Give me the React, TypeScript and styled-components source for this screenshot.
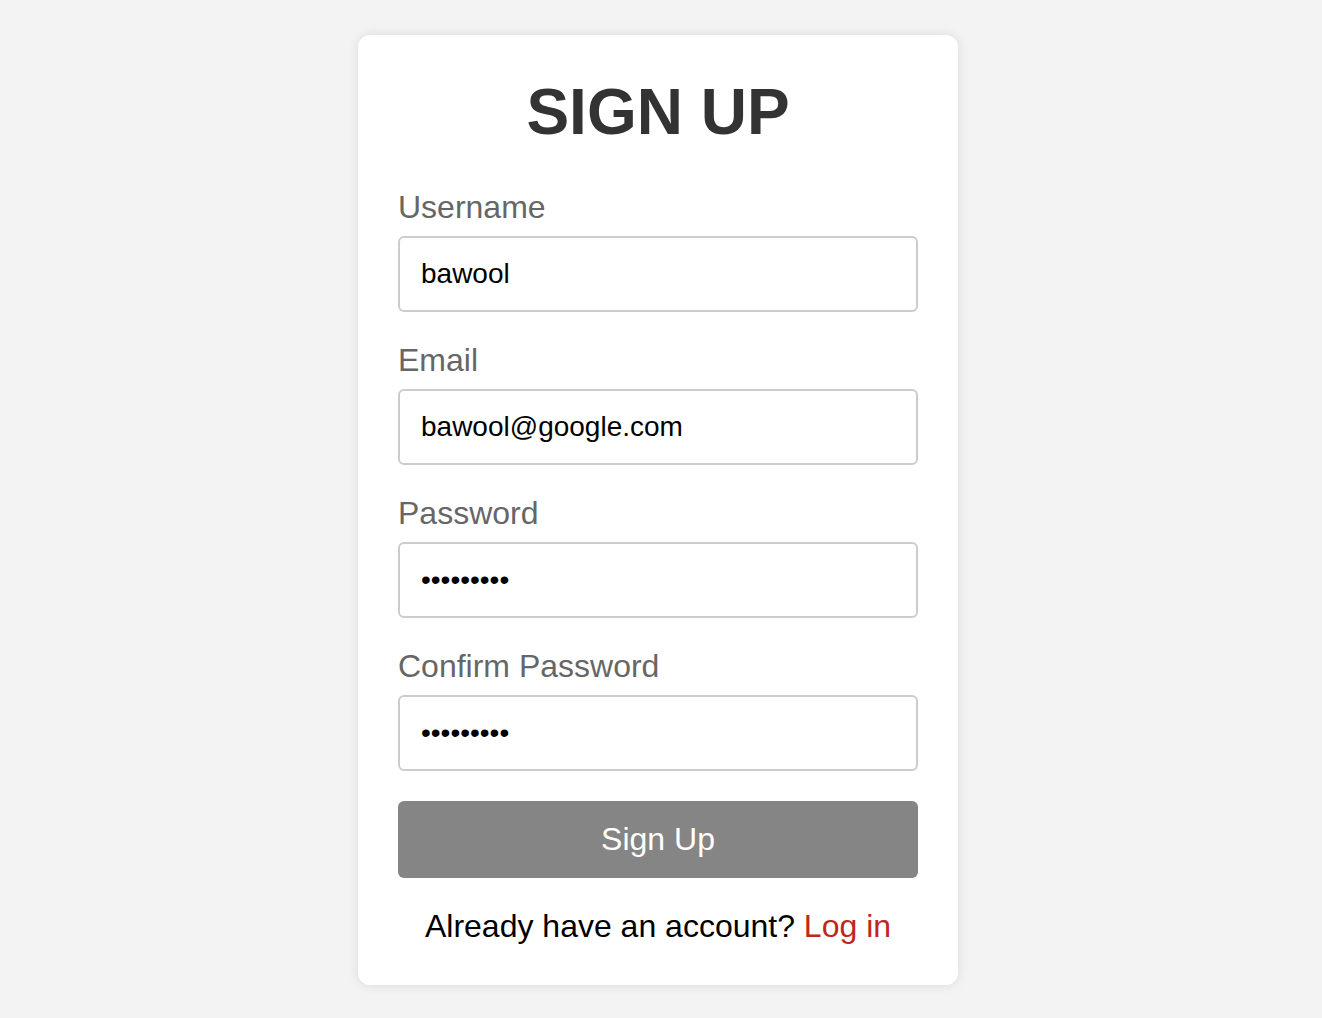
import React from "react";
import styled, { createGlobalStyle } from "styled-components";

const GlobalStyle = createGlobalStyle`
  html, body {
    margin: 0;
    padding: 0;
    background: #f3f3f3;
    font-family: "Liberation Sans", Arial, sans-serif;
  }
`;

const Page = styled.div`
  display: flex;
  justify-content: center;
  align-items: flex-start;
  padding: 35px 6px 33px 0;
  min-height: 1018px;
  box-sizing: border-box;
`;

const Card = styled.form`
  width: 600px;
  box-sizing: border-box;
  background: #ffffff;
  border-radius: 12px;
  box-shadow: 0 0 12px rgba(0, 0, 0, 0.1);
  padding: 40px;
  display: flex;
  flex-direction: column;
`;

const Title = styled.h1`
  margin: 0 0 40px;
  font-size: 64px;
  font-weight: 700;
  color: #333333;
  text-align: center;
  line-height: normal;
`;

const Field = styled.div`
  display: flex;
  flex-direction: column;
  margin-bottom: 30px;
`;

const Label = styled.label`
  font-size: 32px;
  color: #666666;
  line-height: normal;
  margin-bottom: 10px;
`;

const Input = styled.input`
  height: 76px;
  box-sizing: border-box;
  border: 2px solid #cccccc;
  border-radius: 6px;
  padding: 0 20px 0 21px;
  font-family: "Liberation Sans", Arial, sans-serif;
  font-size: 28px;
  color: #000000;
  background: #ffffff;
  outline: none;
`;

const SubmitButton = styled.button`
  height: 77px;
  border: none;
  border-radius: 6px;
  background: #858585;
  color: #ffffff;
  font-family: "Liberation Sans", Arial, sans-serif;
  font-size: 32px;
  cursor: pointer;
`;

const Footer = styled.p`
  margin: 30px 0 0;
  text-align: center;
  font-size: 32px;
  color: #000000;
  line-height: normal;
`;

const LoginLink = styled.a`
  color: #c0261b;
  text-decoration: none;
`;

const fields = [
  { id: "username", label: "Username", type: "text", value: "bawool" },
  { id: "email", label: "Email", type: "email", value: "bawool@google.com" },
  { id: "password", label: "Password", type: "password", value: "123456789" },
  { id: "confirm", label: "Confirm Password", type: "password", value: "123456789" },
];

export default function App() {
  return (
    <>
      <GlobalStyle />
      <Page>
        <Card onSubmit={(e) => e.preventDefault()}>
          <Title>SIGN UP</Title>
          {fields.map((f) => (
            <Field key={f.id}>
              <Label htmlFor={f.id}>{f.label}</Label>
              <Input id={f.id} type={f.type} defaultValue={f.value} />
            </Field>
          ))}
          <SubmitButton type="submit">Sign Up</SubmitButton>
          <Footer>
            Already have an account? <LoginLink href="#">Log in</LoginLink>
          </Footer>
        </Card>
      </Page>
    </>
  );
}
